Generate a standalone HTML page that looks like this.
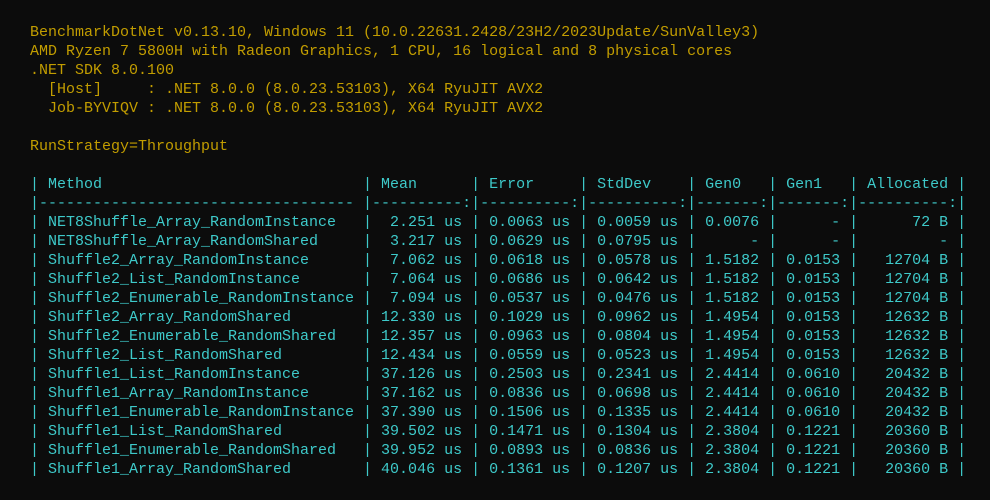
<!DOCTYPE html>
<html><head><style>
html,body{margin:0;padding:0;background:#0c0c0c;width:990px;height:500px;overflow:hidden}
pre{margin:0;position:absolute;left:30px;top:23px;font-family:"Liberation Mono",monospace;font-size:15px;line-height:19px;color:#3ecaca}
.y{color:#c29d00}
</style></head><body><pre><span class="y">BenchmarkDotNet v0.13.10, Windows 11 (10.0.22631.2428/23H2/2023Update/SunValley3)
AMD Ryzen 7 5800H with Radeon Graphics, 1 CPU, 16 logical and 8 physical cores
.NET SDK 8.0.100
  [Host]     : .NET 8.0.0 (8.0.23.53103), X64 RyuJIT AVX2
  Job-BYVIQV : .NET 8.0.0 (8.0.23.53103), X64 RyuJIT AVX2

RunStrategy=Throughput
</span>
| Method                             | Mean      | Error     | StdDev    | Gen0   | Gen1   | Allocated |
|----------------------------------- |----------:|----------:|----------:|-------:|-------:|----------:|
| NET8Shuffle_Array_RandomInstance   |  2.251 us | 0.0063 us | 0.0059 us | 0.0076 |      - |      72 B |
| NET8Shuffle_Array_RandomShared     |  3.217 us | 0.0629 us | 0.0795 us |      - |      - |         - |
| Shuffle2_Array_RandomInstance      |  7.062 us | 0.0618 us | 0.0578 us | 1.5182 | 0.0153 |   12704 B |
| Shuffle2_List_RandomInstance       |  7.064 us | 0.0686 us | 0.0642 us | 1.5182 | 0.0153 |   12704 B |
| Shuffle2_Enumerable_RandomInstance |  7.094 us | 0.0537 us | 0.0476 us | 1.5182 | 0.0153 |   12704 B |
| Shuffle2_Array_RandomShared        | 12.330 us | 0.1029 us | 0.0962 us | 1.4954 | 0.0153 |   12632 B |
| Shuffle2_Enumerable_RandomShared   | 12.357 us | 0.0963 us | 0.0804 us | 1.4954 | 0.0153 |   12632 B |
| Shuffle2_List_RandomShared         | 12.434 us | 0.0559 us | 0.0523 us | 1.4954 | 0.0153 |   12632 B |
| Shuffle1_List_RandomInstance       | 37.126 us | 0.2503 us | 0.2341 us | 2.4414 | 0.0610 |   20432 B |
| Shuffle1_Array_RandomInstance      | 37.162 us | 0.0836 us | 0.0698 us | 2.4414 | 0.0610 |   20432 B |
| Shuffle1_Enumerable_RandomInstance | 37.390 us | 0.1506 us | 0.1335 us | 2.4414 | 0.0610 |   20432 B |
| Shuffle1_List_RandomShared         | 39.502 us | 0.1471 us | 0.1304 us | 2.3804 | 0.1221 |   20360 B |
| Shuffle1_Enumerable_RandomShared   | 39.952 us | 0.0893 us | 0.0836 us | 2.3804 | 0.1221 |   20360 B |
| Shuffle1_Array_RandomShared        | 40.046 us | 0.1361 us | 0.1207 us | 2.3804 | 0.1221 |   20360 B |</pre></body></html>
